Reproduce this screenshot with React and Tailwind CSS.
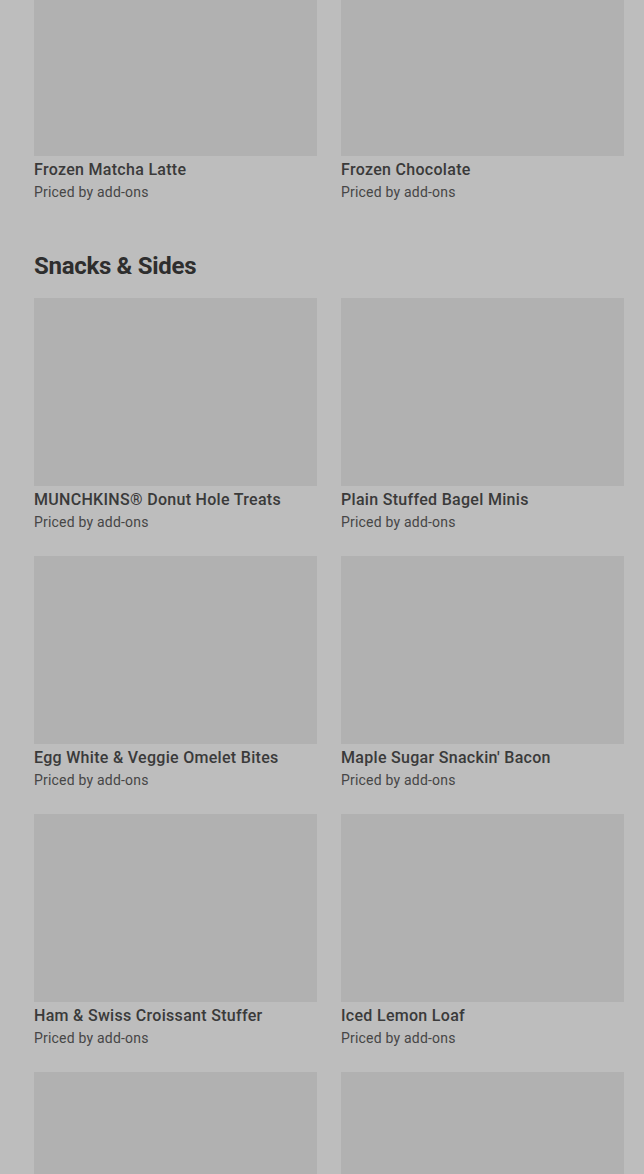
import React from "react";

const font = { fontFamily: "Roboto, 'Liberation Sans', sans-serif" };

function Card({ title, imageOnly }) {
  return (
    <div className="flex flex-col">
      <div className="h-[188px] bg-[#b1b1b1]" />
      {!imageOnly && (
        <>
          <div className="mt-[4px] text-[16px] leading-[20px] font-medium text-[#3a3a3a] whitespace-nowrap tracking-[0.3px]">{title}</div>
          <div className="mt-[2px] text-[14px] leading-[20px] text-[#464646] whitespace-nowrap tracking-[0.2px]">Priced by add-ons</div>
        </>
      )}
    </div>
  );
}

export default function App() {
  const snacks = [
    "MUNCHKINS® Donut Hole Treats",
    "Plain Stuffed Bagel Minis",
    "Egg White & Veggie Omelet Bites",
    "Maple Sugar Snackin' Bacon",
    "Ham & Swiss Croissant Stuffer",
    "Iced Lemon Loaf",
  ];
  return (
    <div className="w-[644px] h-[1174px] overflow-hidden bg-[#bdbdbd]" style={font}>
      <div className="mt-[-32px] pl-[34px] pr-[20px]">
        <div className="grid grid-cols-2 gap-x-[24px]">
          <Card title="Frozen Matcha Latte" />
          <Card title="Frozen Chocolate" />
        </div>
        <h2 className="mt-[48px] text-[24px] leading-[32px] font-bold text-[#2e2e2e] tracking-[-0.3px]">Snacks &amp; Sides</h2>
        <div className="mt-[16px] grid grid-cols-2 gap-x-[24px] gap-y-[24px]">
          {snacks.map((t, i) => (
            <Card key={i} title={t} />
          ))}
          <Card imageOnly />
          <Card imageOnly />
        </div>
      </div>
    </div>
  );
}
